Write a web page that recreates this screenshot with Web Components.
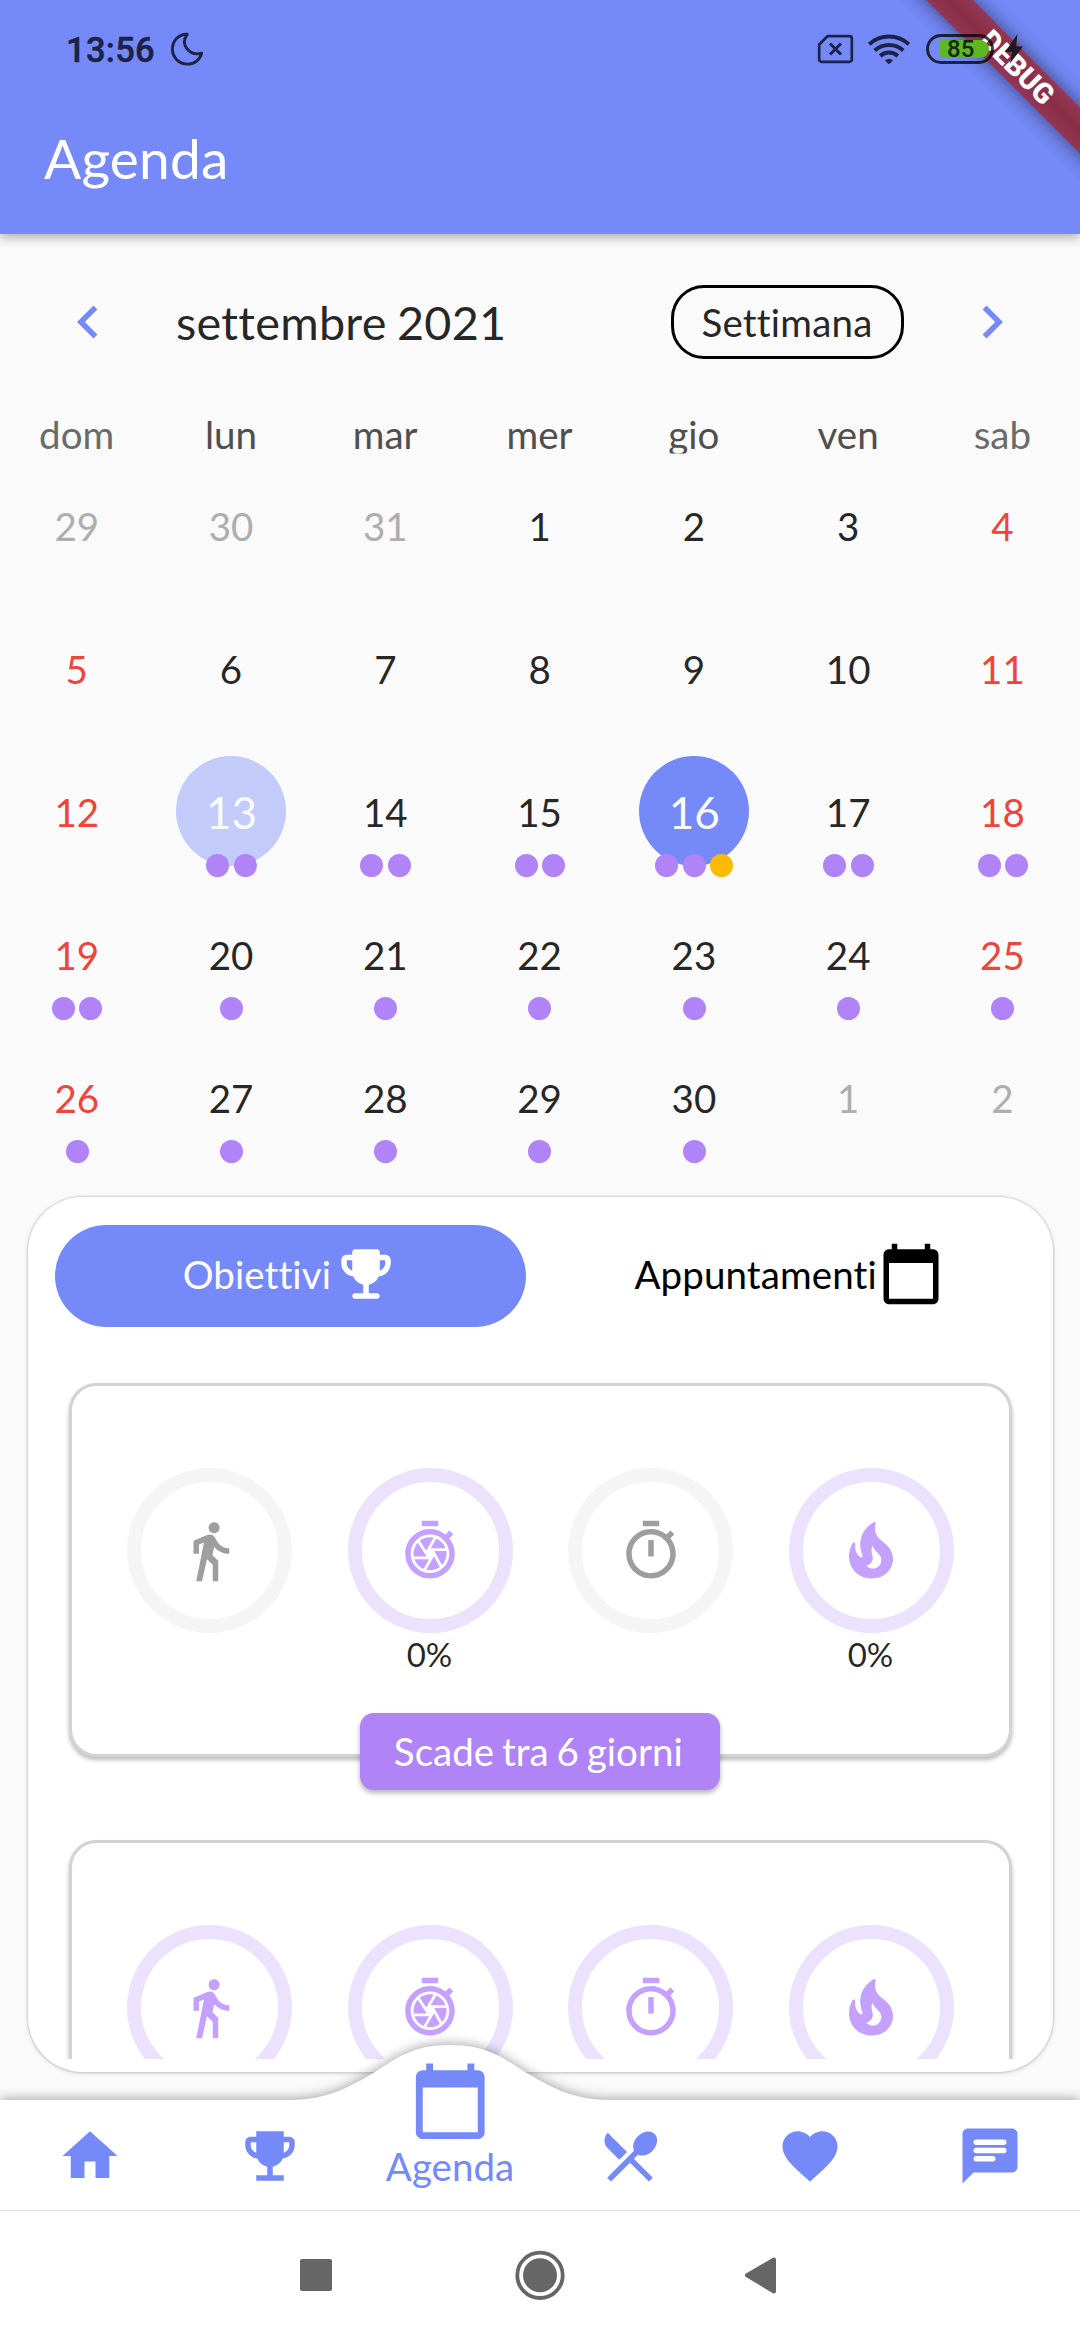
<!DOCTYPE html>
<html lang="it">
<head>
<meta charset="utf-8">
<title>Agenda</title>
<style>
  html, body { margin: 0; }
  body { width: 1080px; height: 2340px; overflow: hidden; background: #fafafa; font-family: Lato, sans-serif; font-size: 38.5px; color: rgba(0,0,0,.87); font-variant-ligatures: none; word-spacing: -.05em; }
</style>
</head>
<body>
<agenda-app></agenda-app>
<script>
const BLUE = '#758af8';
const GLYPHS = {
  left: '<path d="M15.41 7.41L14 6l-6 6 6 6 1.41-1.41L10.83 12z"/>',
  right: '<path d="M10 6L8.59 7.41 13.17 12l-4.58 4.59L10 18l6-6z"/>',
  trophyRound: '<path d="M19 5h-2V4c0-.55-.45-1-1-1H8c-.55 0-1 .45-1 1v1H5c-1.1 0-2 .9-2 2v1c0 2.55 1.92 4.63 4.39 4.94.63 1.5 1.98 2.63 3.61 2.96V19H8c-.55 0-1 .45-1 1s.45 1 1 1h8c.55 0 1-.45 1-1s-.45-1-1-1h-3v-3.1c1.63-.33 2.98-1.46 3.61-2.96C19.08 12.63 21 10.55 21 8V7c0-1.1-.9-2-2-2zM5 8V7h2v3.82C5.84 10.4 5 9.3 5 8zm14 0c0 1.3-.84 2.4-2 2.82V7h2v1z"/>',
  trophy: '<path d="M19 5h-2V3H7v2H5c-1.1 0-2 .9-2 2v1c0 2.55 1.92 4.63 4.39 4.94.63 1.5 1.98 2.63 3.61 2.96V19H7v2h10v-2h-4v-3.1c1.63-.33 2.98-1.46 3.61-2.96C19.08 12.63 21 10.55 21 8V7c0-1.1-.9-2-2-2zM5 8V7h2v3.82C5.84 10.4 5 9.3 5 8zm14 0c0 1.3-.84 2.4-2 2.82V7h2v1z"/>',
  calendar: '<path d="M20 3h-1V1h-2v2H7V1H5v2H4c-1.1 0-2 .9-2 2v16c0 1.1.9 2 2 2h16c1.1 0 2-.9 2-2V5c0-1.1-.9-2-2-2zm0 18H4V8h16v13z"/>',
  walk: '<path d="M13.5 5.5c1.1 0 2-.9 2-2s-.9-2-2-2-2 .9-2 2 .9 2 2 2zM9.8 8.9L7 23h2.1l1.8-8 2.1 2v6h2v-7.5l-2.1-2 .6-3C14.8 12 16.8 13 19 13v-2c-1.9 0-3.5-1-4.3-2.4l-1-1.6c-.4-.6-1-1-1.7-1-.3 0-.5.1-.8.1L6 8.3V13h2V9.6l1.8-.7"/>',
  shutter: '<path d="M15 1H9v2h6V1zm4.03 6.39l1.42-1.42c-.43-.51-.9-.99-1.41-1.41l-1.42 1.42C16.07 4.74 14.12 4 12 4c-4.97 0-9 4.03-9 9s4.02 9 9 9 9-4.03 9-9c0-2.12-.74-4.07-1.97-5.61zM12 20c-3.87 0-7-3.13-7-7s3.13-7 7-7 7 3.13 7 7-3.13 7-7 7zm-.32-5H6.35c.57 1.62 1.82 2.92 3.41 3.56l-.11-.06 2.03-3.5zm5.97-4c-.57-1.6-1.78-2.89-3.34-3.54L12.26 11h5.39zm-7.04 7.83c.45.11.91.17 1.39.17 1.34 0 2.57-.45 3.57-1.19l-2.11-3.9-2.85 4.92zM7.55 8.99C6.59 10.05 6 11.46 6 13c0 .34.04.67.09 1h4.72L7.55 8.99zm8.79 8.14C17.37 16.06 18 14.6 18 13c0-.34-.04-.67-.09-1h-4.34l2.77 5.13zm-3.01-9.98C12.9 7.06 12.46 7 12 7c-1.4 0-2.69.49-3.71 1.29l2.32 3.56 2.72-4.7z"/>',
  timer: '<path d="M15 1H9v2h6V1zm-4 13h2V8h-2v6zm8.03-6.61l1.42-1.42c-.43-.51-.9-.99-1.41-1.41l-1.42 1.42C16.07 4.74 14.12 4 12 4c-4.97 0-9 4.03-9 9s4.02 9 9 9 9-4.03 9-9c0-2.12-.74-4.07-1.97-5.61zM12 20c-3.87 0-7-3.13-7-7s3.13-7 7-7 7 3.13 7 7-3.13 7-7 7z"/>',
  fire: '<path d="M19.48 12.35c-1.57-4.08-7.16-4.3-5.81-10.23.1-.44-.37-.78-.75-.55C9.29 3.71 6.68 8 8.87 13.62c.18.46-.36.89-.75.59-1.81-1.37-2-3.34-1.84-4.75.06-.52-.62-.77-.91-.34C4.69 10.16 4 11.84 4 14.37c.38 5.6 5.11 7.32 6.81 7.54 2.43.31 5.06-.14 6.95-1.87 2.08-1.93 2.84-5.01 1.72-7.69zm-9.28 5.03c1.44-.35 2.18-1.39 2.38-2.31.33-1.43-.96-2.83-.09-5.09.33 1.87 3.27 3.04 3.27 5.08.08 2.53-2.66 4.7-5.56 2.32z"/>',
  home: '<path d="M10 20v-6h4v6h5v-8h3L12 3 2 12h3v8z"/>',
  food: '<path d="M8.1 13.34l2.83-2.83L3.91 3.5c-1.56 1.56-1.56 4.09 0 5.66l4.19 4.18zm6.78-1.81c1.53.71 3.68.21 5.27-1.38 1.91-1.91 2.28-4.65.81-6.12-1.46-1.46-4.2-1.1-6.12.81-1.59 1.59-2.09 3.74-1.38 5.27L3.7 19.87l1.41 1.41L12 14.41l6.88 6.88 1.41-1.41L13.41 13l1.47-1.47z"/>',
  heart: '<path d="M12 21.35l-1.45-1.32C5.4 15.36 2 12.28 2 8.5 2 5.42 4.42 3 7.5 3c1.74 0 3.41.81 4.5 2.09C13.09 3.81 14.76 3 16.5 3 19.58 3 22 5.42 22 8.5c0 3.78-3.4 6.86-8.55 11.54L12 21.35z"/>',
  chat: '<path d="M20 2H4c-1.1 0-2 .9-2 2v18l4-4h14c1.1 0 2-.9 2-2V4c0-1.1-.9-2-2-2z"/><path d="M7 7h10M7 10h10M7 13h6" stroke="#fff" stroke-width="2" stroke-linecap="round"/>'
};

function define(name, render) {
  customElements.define(name, class extends HTMLElement {
    connectedCallback() {
      if (this.shadowRoot) return;
      this.attachShadow({ mode: 'open' }).innerHTML = render(this);
    }
  });
}
const attr = (el, n, d = '') => el.getAttribute(n) ?? d;

define('md-icon', el => `
<style>:host{display:block;flex:none;width:var(--size,66px);height:var(--size,66px)} svg{display:block;width:100%;height:100%;fill:currentColor}</style>
<svg viewBox="0 0 24 24">${GLYPHS[attr(el, 'name')]}</svg>`);

define('status-bar', () => `
<style>
:host{display:flex;align-items:center;height:98px;padding:0 57px 0 66px;color:#1c2347;position:relative;z-index:3}
.time{font:500 34.5px/40px Roboto,sans-serif;letter-spacing:.3px;-webkit-text-stroke:.5px #1c2347;width:104px;padding-top:2px}
svg{display:block;flex:none}
.gap{flex:1}
.wifi{margin:0 16px 0 14px}
.batt{box-sizing:border-box;width:68px;height:30px;border:3px solid rgba(0,0,0,.75);border-radius:15px;padding:3px 2px 3px 11px;margin-right:11px}
.fill{height:18px;width:49px;background:#5bb722;border-radius:2px 9px 9px 2px;font:500 24px/19px Roboto,sans-serif;color:#12290a;padding-left:7px;box-sizing:border-box}
</style>
<div class="time">13:56</div>
<svg width="34" height="34" viewBox="0 0 34 34" fill="none" stroke="currentColor" stroke-width="2.9" stroke-linejoin="round"><path d="M17.2 2.3C8.500 2 2.400 9 2.400 17.300a15 15 0 0 0 15.200 14.800c7 0 12.500-4.500 14.100-10.900C20 24.500 9.500 13 17.200 2.300z"/></svg>
<div class="gap"></div>
<svg width="37" height="30" viewBox="0 0 37 30" fill="none" stroke="currentColor" stroke-width="2.700"><path d="M10.500 2.200H32.500a2.300 2.300 0 0 1 2.300 2.300v21a2.300 2.300 0 0 1-2.300 2.300H4.500a2.300 2.300 0 0 1-2.300-2.300V10.500z" stroke-linejoin="round"/><path d="M13 9.500l11 11M24 9.500l-11 11" stroke-width="3"/></svg>
<svg class="wifi" width="42" height="30" viewBox="0 0 42 30" fill="none" stroke="currentColor" stroke-width="4"><path d="M1.300 10.300a29 29 0 0 1 39.400 0"/><path d="M6.700 16.500a21 21 0 0 1 28.600 0"/><path d="M12.200 22a13 13 0 0 1 17.600 0"/><path d="M17 26.500q4-3.500 8 0l-3 3q-1 .8-2 0z" fill="currentColor" stroke="none"/></svg>
<div class="batt"><div class="fill">85</div></div>
<svg width="18" height="30" viewBox="0 0 18 30" fill="#1d1a26"><path d="M12.500 0L0 18h7L5 29.500 18 12.500h-7z"/></svg>`);

define('debug-ribbon', () => `
<style>
:host{display:block;position:absolute;top:0;right:0;width:220px;height:220px;overflow:hidden;z-index:2;pointer-events:none}
div{position:absolute;left:4.5px;top:49px;width:300px;height:33px;transform:rotate(45deg);color:#fff;text-align:center;font:900 28.5px/33px Roboto,sans-serif;text-indent:6px;background:linear-gradient(#943655,#8a2e46 50%,#943655);box-shadow:0 0 20px rgba(0,0,0,.5)}
</style><div><slot></slot></div>`);

define('app-header', () => `
<style>
:host{display:block;position:relative;height:234px;background:${BLUE};box-shadow:0 3px 11px rgba(0,0,0,.34);z-index:1}
h1{margin:0;font-weight:400;font-size:55px;line-height:66px;letter-spacing:.2px;color:#fff;padding:27px 0 0 44px}
</style>
<debug-ribbon>DEBUG</debug-ribbon><status-bar></status-bar><h1><slot></slot></h1>`);

define('month-header', () => `
<style>
:host{display:flex;align-items:center;height:175.5px;padding:0 55px;box-sizing:border-box}
md-icon{color:${BLUE}}
.month{flex:1;margin-left:55px;font-size:46.75px;line-height:56px;letter-spacing:.27px}
button{all:unset;box-sizing:border-box;width:233px;height:74px;border:3px solid #000;border-radius:33px;text-align:center;font-size:38.5px;line-height:68px;letter-spacing:.2px;margin-right:55.5px}
</style>
<md-icon name="left"></md-icon><div class="month"><slot></slot></div><button><slot name="format"></slot></button><md-icon name="right"></md-icon>`);

define('day-cell', el => {
  const dots = [...attr(el, 'dots')].map(c => `<i class="${c}"></i>`).join('');
  return `
<style>
:host{display:flex;align-items:center;justify-content:center;position:relative;height:143px;color:rgba(0,0,0,.87)}
:host([kind=out]){color:#aeaeae} :host([kind=end]){color:#ee453a}
.n{line-height:46px;padding:1px .8px 0 0}
:host([kind=today]) .n,:host([kind=sel]) .n{display:flex;align-items:center;justify-content:center;width:110px;height:110px;padding:1px 0 0;box-sizing:border-box;border-radius:50%;font-size:44px;color:#fafafa;background:${BLUE}}
:host([kind=today]) .n{background:#c2cbfa}
.dots{position:absolute;top:114px;left:0;right:0;display:flex;justify-content:center;gap:4.5px}
i{width:23px;height:23px;border-radius:50%;background:#b083f7} i.y{background:#fdb904}
</style><div class="n"><slot></slot></div><div class="dots">${dots}</div>`;
});

define('month-grid', () => {
  const dow = ['dom', 'lun', 'mar', 'mer', 'gio', 'ven', 'sab'];
  const dots = { 13: 'pp', 14: 'pp', 15: 'pp', 16: 'ppy', 17: 'pp', 18: 'pp', 19: 'pp' };
  let cells = '';
  for (let i = 0; i < 35; i++) {
    const n = i - 2, col = i % 7;
    const out = n < 1 || n > 30;
    const label = n < 1 ? 31 + n : n > 30 ? n - 30 : n;
    const kind = out ? 'out' : n === 13 ? 'today' : n === 16 ? 'sel' : (col === 0 || col === 6) ? 'end' : '';
    const d = out ? '' : dots[n] || (n > 19 ? 'p' : '');
    cells += `<day-cell kind="${kind}" dots="${d}">${label}</day-cell>`;
  }
  return `
<style>
:host{display:block}
.dow,.days{display:grid;grid-template-columns:repeat(7,1fr)}
.dow{height:44px;clip-path:inset(0);text-align:center;line-height:44px;color:#4f4f4f}
.dow span{padding-top:2.5px;margin-left:-1px}
.dow .we{color:#6a6a6a}
</style>
<div class="dow">${dow.map((d, i) => `<span class="${i % 6 ? '' : 'we'}">${d}</span>`).join('')}</div>
<div class="days">${cells}</div>`;
});

define('tab-pill', () => `
<style>
:host{display:flex;flex:1;align-items:center;justify-content:center;gap:1.5px;height:102px;padding-bottom:4px;box-sizing:border-box;border-radius:51px;color:#000;line-height:46px;letter-spacing:.1px}
:host([active]){background:${BLUE};color:#fff}
</style><slot></slot>`);

define('goal-ring', el => `
<style>
:host{display:flex;flex-direction:column;align-items:center;width:165px;color:#c4a1ff}
:host([off]){color:#9e9e9e}
.ring{width:165px;height:165px;box-sizing:border-box;border:14px solid #ece2fe;border-radius:50%;display:flex;align-items:center;justify-content:center}
:host([off]) .ring{border-color:#f5f5f5}
.pct{font-size:33px;line-height:40px;color:rgba(0,0,0,.87);padding:1px 1px 0 0}
</style><div class="ring"><md-icon name="${attr(el, 'icon')}"></md-icon></div><div class="pct"><slot></slot></div>`);

define('goal-card', () => `
<style>
:host{display:block;flex:none;box-sizing:border-box;height:374px;margin:0 41px 83px 41.5px;background:#fff;border:3px solid #d3d3d3;border-radius:27.5px;box-shadow:0 3px 4px rgba(0,0,0,.27);position:relative}
.rings{display:flex;justify-content:space-between;padding:82px 55px 0}
.badge{position:absolute;left:50%;bottom:-36px;transform:translateX(-50%);box-sizing:border-box;width:360px;height:77px;padding-right:4px;border-radius:13.75px;background:#b084f7;color:#fff;text-align:center;line-height:76px;white-space:nowrap;box-shadow:0 3px 5px rgba(0,0,0,.3)}
</style><div class="rings"><slot></slot></div><div class="badge"><slot name="due"></slot></div>`);

define('agenda-panel', () => `
<style>
:host{display:flex;flex-direction:column;box-sizing:border-box;height:875px;margin:28.5px 27.5px 0;background:#fff;border-radius:55px;box-shadow:0 0 0 1.5px rgba(0,0,0,.07),0 1px 5px rgba(0,0,0,.16)}
.tabs{display:flex;gap:27.5px;padding:28px 27.5px 0}
.list{display:flex;flex-direction:column;overflow:hidden;flex:1;padding-top:56px;margin-bottom:13px}
</style><div class="tabs"><slot name="tab"></slot></div><div class="list"><slot></slot></div>`);

define('nav-item', el => `
<style>
:host{display:flex;flex:1;flex-direction:column;align-items:center;position:relative;color:${BLUE};line-height:46px}
:host([active]) md-icon{--size:82.5px}
</style><md-icon name="${attr(el, 'icon')}"></md-icon><slot></slot>`);

define('bottom-nav', () => `
<style>
:host{display:flex;align-items:flex-end;position:relative;box-sizing:border-box;height:110px;margin-top:27.5px;padding-bottom:21px;z-index:2}
svg.bg{position:absolute;left:0;top:-60px;width:1080px;height:170px;overflow:visible;filter:drop-shadow(0 -1px 6px rgba(0,0,0,.36))}
</style>
<svg class="bg" viewBox="0 0 1080 170"><path fill="#fff" d="M0 60H290C330 60 352 45 375 32C398 17 414 5 450 5C486 5 502 17 525 32C548 45 570 60 610 60H1080V170H0z"/></svg>
<slot></slot>`);

define('system-nav', () => `
<style>
:host{display:flex;justify-content:center;box-sizing:border-box;height:130px;background:#fff;border-top:1px solid #dfdfdf;position:relative;z-index:3}
svg{width:560px;height:129px}
</style>
<svg viewBox="260 2211 560 129" fill="#666"><rect x="300" y="2259" width="32" height="32" rx="2"/><circle cx="540" cy="2275.3" r="17"/><circle cx="540" cy="2275.3" r="22.7" fill="none" stroke="#666" stroke-width="3.8"/><path d="M747 2275.3L774 2259.5V2291.5z" stroke="#666" stroke-width="4" stroke-linejoin="round"/></svg>`);

define('agenda-app', () => `
<style>:host{display:flex;flex-direction:column;width:1080px;height:2340px}</style>
<app-header>Agenda</app-header>
<month-header>settembre 2021<span slot="format">Settimana</span></month-header>
<month-grid></month-grid>
<agenda-panel>
  <tab-pill slot="tab" active>Obiettivi<md-icon name="trophyRound"></md-icon></tab-pill>
  <tab-pill slot="tab">Appuntamenti<md-icon name="calendar"></md-icon></tab-pill>
  <goal-card>
    <goal-ring icon="walk" off></goal-ring><goal-ring icon="shutter">0%</goal-ring><goal-ring icon="timer" off></goal-ring><goal-ring icon="fire">0%</goal-ring>
    <span slot="due">Scade tra 6 giorni</span>
  </goal-card>
  <goal-card>
    <goal-ring icon="walk"></goal-ring><goal-ring icon="shutter"></goal-ring><goal-ring icon="timer"></goal-ring><goal-ring icon="fire"></goal-ring>
  </goal-card>
</agenda-panel>
<bottom-nav>
  <nav-item icon="home"></nav-item><nav-item icon="trophy"></nav-item><nav-item icon="calendar" active>Agenda</nav-item><nav-item icon="food"></nav-item><nav-item icon="heart"></nav-item><nav-item icon="chat"></nav-item>
</bottom-nav>
<system-nav></system-nav>`);
</script>
</body>
</html>
